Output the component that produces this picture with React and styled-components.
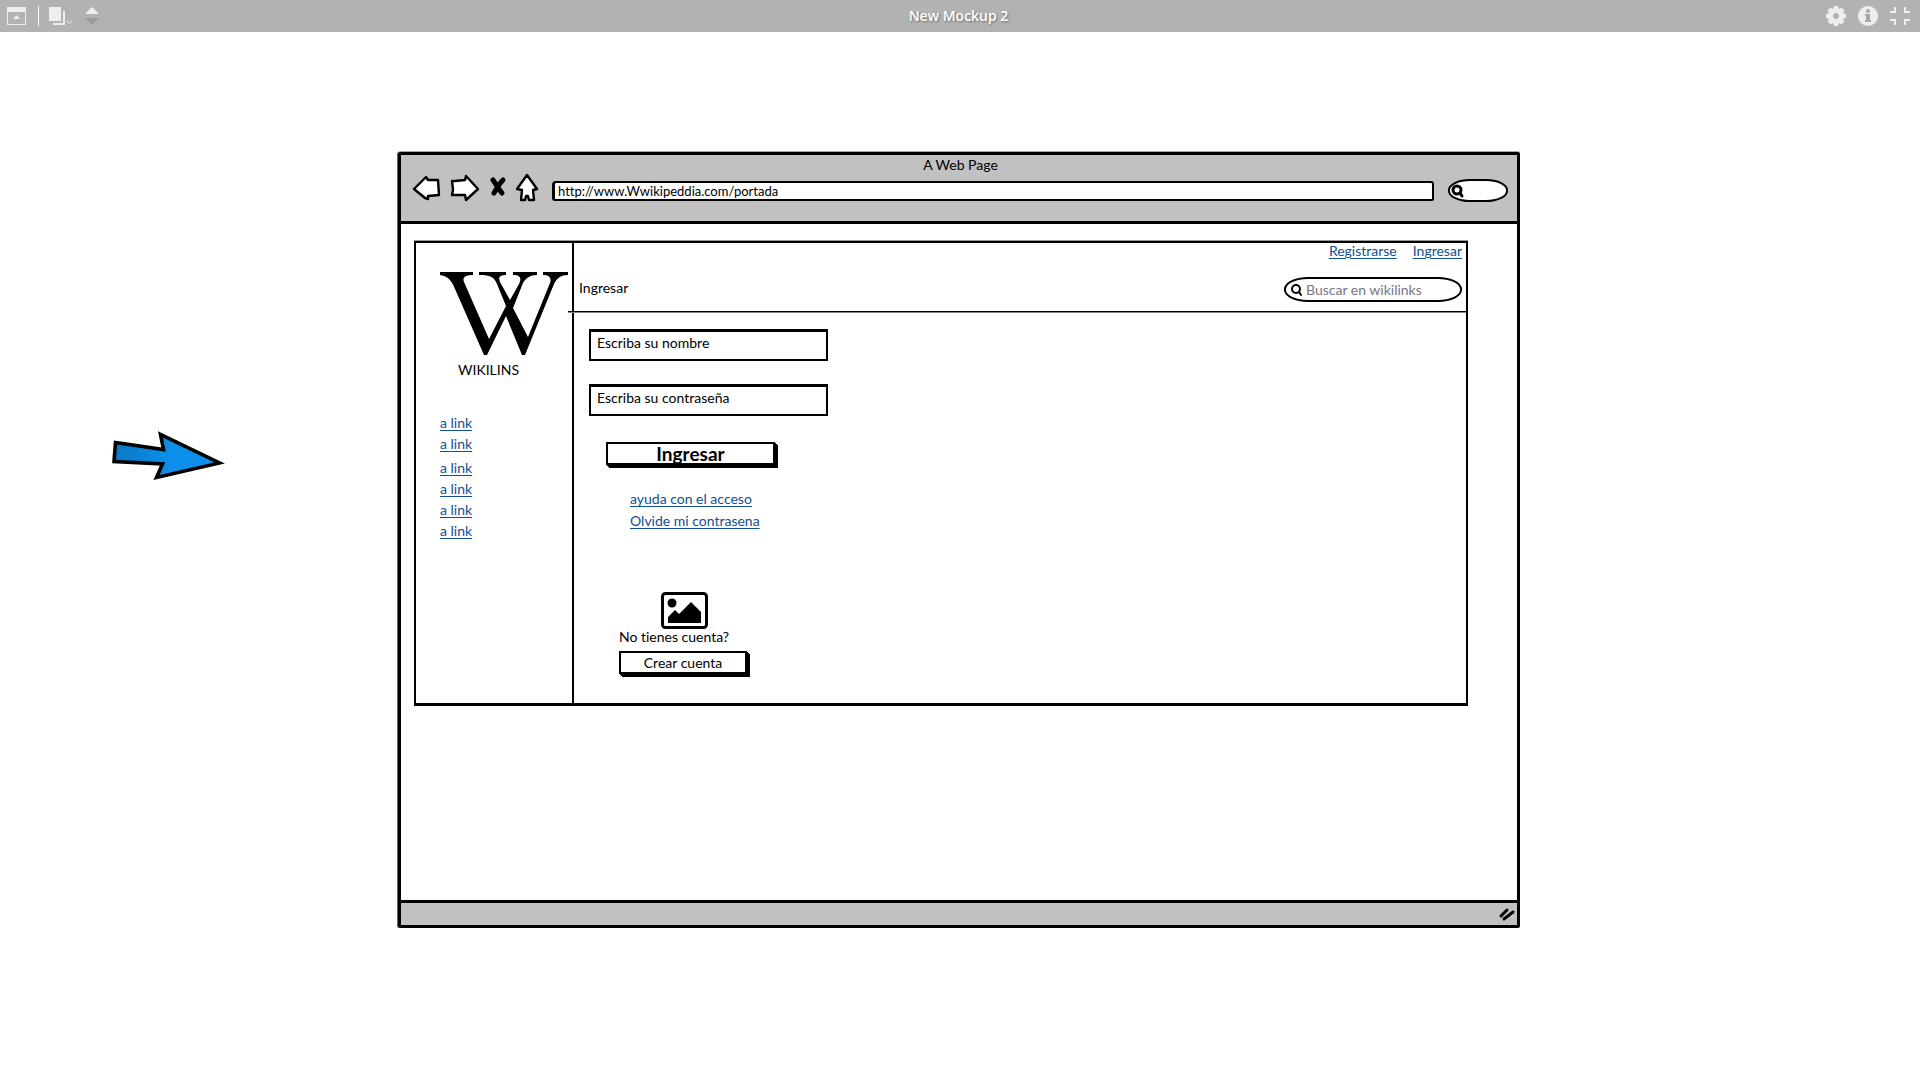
import React from "react";
import styled, { createGlobalStyle } from "styled-components";

const GlobalStyle = createGlobalStyle`
  *, *::before, *::after { box-sizing: border-box; }
  body {
    margin: 0;
    background: #fff;
    color: #000;
    font: 14px/16px Lato, "Open Sans", sans-serif;
    font-variant-ligatures: none;
  }
  button, input { font: inherit; font-variant-ligatures: none; color: inherit; }
  svg { display: block; overflow: visible; }
`;

/* ---------- editor toolbar ---------- */

const Toolbar = styled.header`
  display: grid;
  grid-template-columns: 1fr auto 1fr;
  align-items: center;
  height: 32px;
  padding: 0 10px 0 7px;
  background: #b2b2b2;
`;

const ToolGroup = styled.div`
  display: flex;
  align-items: center;
  justify-content: ${(p) => (p.$end ? "flex-end" : "flex-start")};
  gap: ${(p) => (p.$end ? 12 : 10)}px;
`;

const PlainButton = styled.button`
  display: block;
  padding: 0;
  border: 0;
  background: none;
  cursor: pointer;
`;

const Separator = styled.span`
  width: 1px;
  height: 20px;
  background: #fff;
`;

const DocumentTitle = styled.h1`
  margin: 0;
  color: #fff;
  font: 600 14px/20px "Open Sans", sans-serif;
  text-shadow: 1px 1px 2px rgba(0, 0, 0, 0.4);
`;

/* ---------- canvas ---------- */

const Canvas = styled.main`
  display: grid;
  grid-template-columns: 398px minmax(0, 1fr) 400px;
  align-items: start;
  padding: 120px 0;
`;

const Pointer = styled.div`
  padding: 278px 0 0 111px;
`;

const BrowserWindow = styled.section`
  border: 3px solid #000;
  border-radius: 2px;
  box-shadow: -1px 0 0 #666, 0 -1px 0 #aaa;
`;

const Chrome = styled.header`
  padding: 2px 9px 18px 12px;
  height: 69px;
  border-bottom: 3px solid #000;
  background: #c1c1c1;
`;

const WindowTitle = styled.h2`
  margin: 0;
  font-size: 14px;
  font-weight: 400;
  line-height: 16px;
  text-align: center;
`;

const Navigation = styled.div`
  display: flex;
  align-items: center;
  gap: 14px;
`;

const NavButtons = styled.div`
  display: flex;
  align-items: center;
  gap: 10px;
`;

const AddressInput = styled.input`
  flex: 1;
  min-width: 0;
  height: 20px;
  margin-top: 6px;
  padding: 0 3px;
  border: 2px solid #000;
  border-left-width: 3px;
  border-radius: 4px 3px 2px 3px;
  background: #fff;
  font-size: 13px;
`;

const SearchBox = styled.label`
  display: flex;
  align-items: center;
  gap: 4px;
  width: ${(p) => (p.$small ? 60 : 178)}px;
  height: ${(p) => (p.$small ? 23 : 25)}px;
  margin-top: ${(p) => (p.$small ? 6 : 18)}px;
  padding: 0 ${(p) => (p.$small ? 2 : 5)}px;
  border: 2px solid #000;
  border-radius: ${(p) => (p.$small ? "22px / 11px" : "24px / 12px")};
  background: #fff;
`;

const SearchInput = styled.input`
  flex: 1;
  min-width: 0;
  padding: 0;
  border: 0;
  outline: 0;
  background: none;
  &::placeholder { color: #77757f; opacity: 1; }
`;

const Viewport = styled.div`
  padding: 17px 49px 194px 13px;
`;

const StatusBar = styled.footer`
  display: flex;
  align-items: center;
  justify-content: flex-end;
  height: 25px;
  padding-right: 2px;
  border-top: 3px solid #000;
  background: #c1c1c1;
`;

/* ---------- the sketched page ---------- */

const Page = styled.div`
  display: grid;
  grid-template-columns: 156px minmax(0, 1fr);
  border: 2px solid #000;
  border-bottom-width: 3px;
  box-shadow: 0 -1px 0 #999;
`;

const Sidebar = styled.aside`
  padding: 29px 0 0 24px;
`;

const SiteName = styled.p`
  width: 97px;
  margin: 6px 0 37px;
  text-align: center;
`;

const LinkList = styled.ul`
  display: flex;
  flex-direction: column;
  gap: ${(p) => p.$gap}px;
  margin: ${(p) => p.$margin || "0"};
  padding: 0;
  list-style: none;
`;

const Link = styled.a`
  color: #104f93;
  text-decoration: underline;
  text-underline-offset: 2px;
`;

const Content = styled.section`
  border-left: 2px solid #000;
`;

const PageHeader = styled.header`
  display: flex;
  justify-content: space-between;
  align-items: flex-end;
  margin-left: -6px;
  padding: 0 4px 9px 11px;
  border-bottom: 1px solid #000;
  box-shadow: 0 1px 0 #888;
`;

const PageTitle = styled.h3`
  margin: 0 0 6px;
  font-size: 14px;
  font-weight: 400;
  line-height: 16px;
`;

const HeaderTools = styled.div`
  display: flex;
  flex-direction: column;
  align-items: flex-end;
`;

const AccountLinks = styled.nav`
  display: flex;
  gap: 16px;
`;

const Form = styled.form`
  display: flex;
  flex-direction: column;
  align-items: flex-start;
  padding: 17px 0 29px 15px;
`;

const Field = styled.input`
  width: 239px;
  height: 32px;
  margin-bottom: 23px;
  padding: 0 6px 6px;
  border: 2px solid #000;
  border-top-width: 3px;
  background: #fff;
  &::placeholder { color: #000; opacity: 1; }
`;

const SketchButton = styled.button`
  width: ${(p) => (p.$primary ? 169 : 128)}px;
  height: 23px;
  margin: ${(p) => (p.$primary ? "3px 0 26px 17px" : "0")};
  padding: 0;
  border: 2px solid #000;
  background: #fff;
  box-shadow: 1px 1px 0 #000, 2px 2px 0 #000, 3px 3px 0 #000;
  font-size: ${(p) => (p.$primary ? 19 : 14)}px;
  font-weight: ${(p) => (p.$primary ? 700 : 400)};
  line-height: 18px;
  cursor: pointer;
`;

const SignUp = styled.div`
  display: flex;
  flex-direction: column;
  align-items: flex-start;
  margin: 63px 0 0 30px;
`;

const Picture = styled.span`
  margin-left: 42px;
`;

const Question = styled.p`
  margin: 0 0 6px;
`;

/* ---------- drawings ---------- */

const PanelIcon = () => (
  <svg width="21" height="18" viewBox="0 0 21 18">
    <path d="M0 0h19v18H0z M1 5v12h17V5z" fill="#eee" fillRule="evenodd" />
    <path d="M6 12l3.5-4 3.5 4z" fill="#eee" />
  </svg>
);

const PagesIcon = () => (
  <svg width="26" height="18" viewBox="0 0 26 18">
    <path d="M0 0h12v14H0z M14 4h2v14H4v-2h10z" fill="#eee" />
    <path d="M18 14l2.5 2.5L23 14" fill="none" stroke="#eee" />
  </svg>
);

const SortIcon = () => (
  <svg width="14" height="18" viewBox="0 0 14 18">
    <path d="M0 7l7-7 7 7z" fill="#eee" />
    <path d="M0 11h14l-7 7z" fill="#999" />
  </svg>
);

const GearIcon = () => (
  <svg width="20" height="20" viewBox="-10 -10 20 20" fill="#eee">
    {[0, 45, 90, 135].map((angle) => (
      <rect key={angle} x="-2.5" y="-10" width="5" height="20" rx="1.5" transform={`rotate(${angle})`} />
    ))}
    <circle r="8" />
    <circle r="3" fill="#b2b2b2" />
  </svg>
);

const InfoIcon = () => (
  <svg width="20" height="20" viewBox="0 0 20 20">
    <circle cx="10" cy="10" r="10" fill="#eee" />
    <circle cx="10" cy="5" r="2" fill="#a8a8a8" />
    <path d="M7 8h5v6h1v2H7v-2h1v-4H7z" fill="#a8a8a8" />
  </svg>
);

const ShrinkIcon = () => (
  <svg width="20" height="18" viewBox="0 0 20 18" fill="none" stroke="#eee" strokeWidth="2">
    <path d="M0 5h5V0M20 5h-5V0M0 13h5v5M20 13h-5v5" />
  </svg>
);

const BackIcon = () => (
  <svg width="27" height="26" viewBox="0 0 27 26" fill="#fff" stroke="#000" strokeWidth="2.4" strokeLinejoin="round">
    <path d="M1 14L13 2l2 3 10 0 1 15-11 1v3l-3-1z" />
  </svg>
);

const ForwardIcon = () => (
  <svg width="29" height="26" viewBox="0 0 29 26" fill="#fff" stroke="#000" strokeWidth="2.4" strokeLinejoin="round">
    <path d="M2 6l3 0 10-1 1-4 12 13-12 11-1-5-13 0 1-5z" />
  </svg>
);

const StopIcon = () => (
  <svg width="17" height="26" viewBox="1 0 17 26" fill="none" stroke="#000" strokeWidth="5" strokeLinecap="round">
    <path d="M5 5c3 4 6 10 9 13M15 5c-4 4-6 8-9 13" />
  </svg>
);

const HomeIcon = () => (
  <svg width="22" height="27" viewBox="0 0 22 27" fill="#fff" stroke="#000" strokeWidth="2.4" strokeLinejoin="round">
    <path d="M11 1L1 15l5 1-1 10h4l1-4h2l1 4h5l-1-10 4-1z" />
  </svg>
);

const MagnifierIcon = ({ bold }) => (
  <svg width="11" height="12" viewBox="0 0 11 12" fill="none" stroke="#000" strokeWidth={bold ? 3 : 2} strokeLinecap="round">
    <circle cx="5" cy="5" r="4" />
    <path d="M8 8l2 3" />
  </svg>
);

const GripIcon = () => (
  <svg width="16" height="13" viewBox="0 0 16 13" stroke="#000" strokeWidth="3" strokeLinecap="round">
    <path d="M2 8l6-6M5 11l9-7" />
  </svg>
);

const LogoMark = () => (
  <svg width="128" height="84" viewBox="0 0 128 84" role="img" aria-label="Wikilins">
    <path d="M0 0h33v3c-7 0-11 2-9 7l25 57 17-33-9-22C54 5 51 3 39 3V0h27v3c-6 0-8 2-6 7l10 18 9-16c3-6 1-9-6-9V0h24v3c-7 0-11 3-14 8L73 36l15 29 22-54c2-5-1-8-7-8V0h25v3c-7 0-11 3-14 9L85 83h-3L66 44 47 83h-3L15 17C11 7 7 4 0 3z" />
  </svg>
);

const PictureIcon = () => (
  <svg width="47" height="37" viewBox="0 0 47 37">
    <rect x="1.5" y="1.5" width="44" height="34" rx="3" fill="#fff" stroke="#000" strokeWidth="3" />
    <circle cx="11" cy="11" r="4.5" />
    <path d="M7 31v-6l7-7 4 4 12-12 10 10v11z" />
  </svg>
);

const PointerIcon = () => (
  <svg width="116" height="52" viewBox="0 0 116 52">
    <defs>
      <linearGradient id="pointer-fill" x1="0" x2="1">
        <stop offset="0" stopColor="#0b78c8" />
        <stop offset="0.55" stopColor="#0b8fea" />
        <stop offset="1" stopColor="#0b8fea" />
      </linearGradient>
    </defs>
    <path
      d="M4.500 12.500L52.500 19.500L49.500 4.500L108.500 33L45.500 47.500L51.500 34L3 31.500z"
      fill="url(#pointer-fill)"
      stroke="#000"
      strokeWidth="3.6"
    />
  </svg>
);

/* ---------- composition ---------- */

const sidebarGroups = [2, 4];

export default function App() {
  return (
    <>
      <GlobalStyle />
      <Toolbar>
        <ToolGroup>
          <PlainButton aria-label="Panel"><PanelIcon /></PlainButton>
          <Separator />
          <PlainButton aria-label="Mockups"><PagesIcon /></PlainButton>
          <PlainButton aria-label="Previous or next"><SortIcon /></PlainButton>
        </ToolGroup>
        <DocumentTitle>New Mockup 2</DocumentTitle>
        <ToolGroup $end>
          <PlainButton aria-label="Settings"><GearIcon /></PlainButton>
          <PlainButton aria-label="Information"><InfoIcon /></PlainButton>
          <PlainButton aria-label="Exit full screen"><ShrinkIcon /></PlainButton>
        </ToolGroup>
      </Toolbar>

      <Canvas>
        <Pointer><PointerIcon /></Pointer>

        <BrowserWindow>
          <Chrome>
            <WindowTitle>A Web Page</WindowTitle>
            <Navigation>
              <NavButtons>
                <PlainButton aria-label="Back"><BackIcon /></PlainButton>
                <PlainButton aria-label="Forward"><ForwardIcon /></PlainButton>
                <PlainButton aria-label="Stop"><StopIcon /></PlainButton>
                <PlainButton aria-label="Home"><HomeIcon /></PlainButton>
              </NavButtons>
              <AddressInput aria-label="Address" defaultValue="http://www.Wwikipeddia.com/portada" />
              <SearchBox $small>
                <MagnifierIcon bold />
                <SearchInput aria-label="Search" />
              </SearchBox>
            </Navigation>
          </Chrome>

          <Viewport>
            <Page>
              <Sidebar>
                <LogoMark />
                <SiteName>WIKILINS</SiteName>
                {sidebarGroups.map((count, group) => (
                  <LinkList key={group} $gap={5} $margin={group ? "8px 0 0" : "0"}>
                    {Array.from({ length: count }, (_, i) => (
                      <li key={i}><Link href="#">a link</Link></li>
                    ))}
                  </LinkList>
                ))}
              </Sidebar>

              <Content>
                <PageHeader>
                  <PageTitle>Ingresar</PageTitle>
                  <HeaderTools>
                    <AccountLinks>
                      <Link href="#">Registrarse</Link>
                      <Link href="#">Ingresar</Link>
                    </AccountLinks>
                    <SearchBox>
                      <MagnifierIcon />
                      <SearchInput aria-label="Buscar" placeholder="Buscar en wikilinks" />
                    </SearchBox>
                  </HeaderTools>
                </PageHeader>

                <Form onSubmit={(e) => e.preventDefault()}>
                  <Field aria-label="Nombre" placeholder="Escriba su nombre" />
                  <Field aria-label="Contraseña" type="password" placeholder="Escriba su contraseña" />
                  <SketchButton $primary type="submit">Ingresar</SketchButton>
                  <LinkList $gap={6} $margin="0 0 0 41px">
                    <li><Link href="#">ayuda con el acceso</Link></li>
                    <li><Link href="#">Olvide mi contrasena</Link></li>
                  </LinkList>
                  <SignUp>
                    <Picture><PictureIcon /></Picture>
                    <Question>No tienes cuenta?</Question>
                    <SketchButton type="button">Crear cuenta</SketchButton>
                  </SignUp>
                </Form>
              </Content>
            </Page>
          </Viewport>

          <StatusBar><GripIcon /></StatusBar>
        </BrowserWindow>
      </Canvas>
    </>
  );
}
